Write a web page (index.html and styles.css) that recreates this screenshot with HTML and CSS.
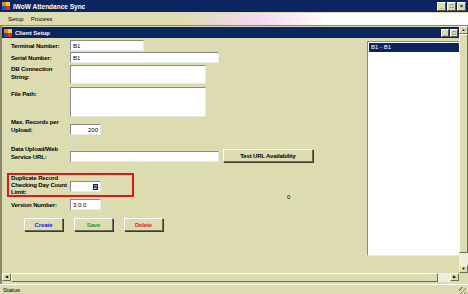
FILE: index.html
```html
<!DOCTYPE html>
<html lang="en">
<head>
    <meta charset="UTF-8">
    <title>iWoW Attendance Sync</title>
    <link rel="stylesheet" href="styles.css">
</head>
<body>
    <div class="app">
        <!-- Main window title -->
        <div class="titlebar">
            <svg class="appicon" width="8" height="8" viewBox="0 0 8 8">
                <rect x="0" y="0" width="4" height="4" fill="#f08020"/>
                <rect x="4" y="0" width="4" height="4" fill="#f0d020"/>
                <rect x="0" y="4" width="4" height="4" fill="#2050d0"/>
                <rect x="4" y="4" width="4" height="4" fill="#e03020"/>
            </svg>
            <span class="title">iWoW Attendance Sync</span>
            <div class="winbtns">
                <span class="winbtn">_</span>
                <span class="winbtn">&#9633;</span>
                <span class="winbtn">&#215;</span>
            </div>
        </div>

        <div class="menubar">
            <span class="menuitem">Setup</span>
            <span class="menuitem">Process</span>
        </div>

        <div class="mdi">
            <div class="mdi-main">
                <!-- Client Setup child window -->
                <div class="child">
                    <div class="child-title">
                        <svg class="appicon" width="8" height="8" viewBox="0 0 8 8">
                            <rect x="0" y="0" width="4" height="4" fill="#f08020"/>
                            <rect x="4" y="0" width="4" height="4" fill="#f0d020"/>
                            <rect x="0" y="4" width="4" height="4" fill="#2050d0"/>
                            <rect x="4" y="4" width="4" height="4" fill="#e03020"/>
                        </svg>
                        <span class="title">Client Setup</span>
                        <div class="winbtns">
                            <span class="winbtn">_</span>
                            <span class="winbtn">&#9633;</span>
                        </div>
                    </div>

                    <div class="child-body">
                        <div class="form">
                            <div class="row r1">
                                <label class="lbl mid">Terminal Number:</label>
                                <div class="field w-sm2">B1</div>
                            </div>
                            <div class="row r2">
                                <label class="lbl mid">Serial Number:</label>
                                <div class="field w-lg">B1</div>
                            </div>
                            <div class="row r3">
                                <label class="lbl">DB Connection String:</label>
                                <div class="field w-md h-db"></div>
                            </div>
                            <div class="row r4">
                                <label class="lbl pad4">File Path:</label>
                                <div class="field w-md h-path"></div>
                            </div>
                            <div class="row r5">
                                <label class="lbl">Max. Records per Upload:</label>
                                <div class="field w-xs num off6">200</div>
                            </div>
                            <div class="row r6">
                                <label class="lbl">Data Upload/Web Service URL:</label>
                                <div class="field w-lg off6"></div>
                                <button class="btn btn-test">Test URL Availability</button>
                            </div>
                            <div class="row r7">
                                <div class="highlight">
                                    <label class="lbl">Duplicate Record Checking Day Count Limit:</label>
                                    <div class="field w-xs num off6"><span class="sel">2</span></div>
                                </div>
                                <span class="zero">0</span>
                            </div>
                            <div class="row r8">
                                <label class="lbl mid">Version Number:</label>
                                <div class="field w-xs">3.0.0</div>
                            </div>
                            <div class="actions">
                                <button class="btn btn-create">Create</button>
                                <button class="btn btn-save">Save</button>
                                <button class="btn btn-delete">Delete</button>
                            </div>
                        </div>

                        <div class="listbox">
                            <div class="list-item selected">B1 - B1</div>
                        </div>
                    </div>
                </div>

                <div class="vscroll">
                    <span class="sbtn">&#9650;</span>
                    <span class="vthumb"></span>
                    <span class="strack"></span>
                    <span class="sbtn">&#9660;</span>
                </div>
            </div>
            <div class="mdi-bottom">
                <div class="hscroll">
                    <span class="sbtn">&#9664;</span>
                    <span class="hthumb"></span>
                    <span class="strack"></span>
                    <span class="sbtn">&#9654;</span>
                </div>
                <div class="corner"></div>
            </div>
        </div>

        <div class="statusbar">
            <span>Status</span>
            <span class="grip"></span>
        </div>
    </div>
</body>
</html>
```

FILE: styles.css
```css
body {
    margin: 0;
    background: #dddcb1;
    font-family: "Liberation Sans", Arial, sans-serif;
    font-size: 6px;
    color: #000;
}
.app {
    width: 468px;
    height: 294px;
    display: flex;
    flex-direction: column;
    overflow: hidden;
}

/* title bars */
.titlebar, .child-title {
    background: #0b2560;
    color: #fff;
    display: flex;
    align-items: center;
    font-weight: bold;
}
.titlebar {
    height: 12px;
    padding: 0 2px;
    font-size: 6.5px;
}
.appicon {
    margin-right: 3px;
    flex: none;
}
.title {
    flex: 1;
}
.winbtns {
    display: flex;
    gap: 1px;
}
.winbtn {
    width: 7px;
    height: 7px;
    background: #dddcb1;
    color: #000;
    border: 1px solid;
    border-color: #fff #555 #555 #fff;
    font-size: 6px;
    line-height: 6px;
    text-align: center;
    font-weight: bold;
}

.menubar {
    height: 12px;
    margin-top: 1px;
    display: flex;
    align-items: center;
    padding-left: 8px;
    gap: 7px;
    background: linear-gradient(to right, #dddcb1 0%, #dddcb1 38%, #f2d8f4 55%, #fbeefc 64%, #fff 70%);
}

/* MDI area */
.mdi {
    height: 258px;
    border-top: 1px solid #8a8866;
    border-left: 2px solid #8a8866;
    display: flex;
    flex-direction: column;
}
.mdi-main {
    display: flex;
    height: 247px;
}
.child {
    flex: 1;
    overflow: hidden;
    padding-top: 1px;
}
.child-title {
    height: 11px;
    padding: 0 1px 0 2px;
    font-size: 6px;
}
.child-title .winbtn {
    width: 6px;
    height: 6px;
}

.child-body {
    display: flex;
    height: 240px;
}
.form {
    width: 356px;
    padding: 2px 0 0 9px;
    display: flex;
    flex-direction: column;
}
.row {
    display: flex;
    align-items: flex-start;
}
.lbl {
    width: 59px;
    padding-right: 4px;
    box-sizing: border-box;
    font-weight: bold;
    line-height: 8px;
    letter-spacing: -0.15px;
    flex: none;
}
.lbl.mid {
    align-self: center;
}
.lbl.pad4 {
    padding-top: 3px;
}
.field {
    height: 11px;
    box-sizing: border-box;
    background: #fff;
    border: 1px solid;
    border-color: #8a8a8a #e8e8e8 #e8e8e8 #8a8a8a;
    padding: 1px 2px;
    line-height: 8px;
    font-size: 6px;
}
.w-xs { width: 31px; }
.w-sm2 { width: 74px; }
.w-md { width: 136px; }
.w-lg { width: 149px; }
.h-db { height: 19px; }
.h-path { height: 30px; }
.num { text-align: right; }
.off6 { margin-top: 6px; }

.r2 { margin-top: 1px; }
.r3 { margin-top: 2px; }
.r4 { margin-top: 3px; }
.r5 { margin-top: 1px; }
.r6 { margin-top: 10px; }
.r7 { margin-top: 11px; }
.r8 { margin-top: 2px; }

.highlight {
    display: flex;
    align-items: flex-start;
    width: 127px;
    height: 24px;
    box-sizing: border-box;
    border: 2px solid #e8121c;
    margin-left: -4px;
    padding-left: 2px;
}
.highlight .lbl {
    width: 59px;
    padding-right: 0;
    line-height: 7px;
}
.highlight .field {
    margin-top: 6px;
}
.sel {
    background: #0b2560;
    color: #fff;
    padding: 0 1px;
}
.zero {
    align-self: flex-end;
    margin-left: 153px;
    margin-bottom: -3px;
}

.btn {
    height: 13px;
    box-sizing: border-box;
    background: #dddcb1;
    border: 1px solid;
    border-color: #fff #6e6d55 #6e6d55 #fff;
    box-shadow: 1px 1px 0 #3c3b2c;
    font-family: inherit;
    font-size: 6px;
    font-weight: bold;
    letter-spacing: -0.15px;
    padding: 0;
    cursor: pointer;
}
.btn-test {
    width: 90px;
    margin: 4px 0 0 4px;
}
.actions {
    display: flex;
    margin: 8px 0 0 13px;
}
.actions .btn {
    width: 39px;
    margin-right: 11px;
}
.btn-create { color: #1c1ce0; }
.btn-save { color: #1e9a1e; }
.btn-delete { color: #e82020; }

.listbox {
    width: 90px;
    height: 212px;
    margin-top: 3px;
    background: #fff;
    border-left: 1px solid #8a8a8a;
    border-top: 1px solid #8a8a8a;
    border-bottom: 1px solid #e8e8e8;
    padding: 1px 0 0 1px;
}
.list-item {
    height: 9px;
    line-height: 9px;
    padding-left: 2px;
}
.list-item.selected {
    background: #0b2560;
    color: #fff;
}

/* scrollbars */
.vscroll {
    width: 9px;
    display: flex;
    flex-direction: column;
}
.sbtn {
    width: 9px;
    height: 8px;
    box-sizing: border-box;
    background: #dddcb1;
    border: 1px solid;
    border-color: #fff #6e6d55 #6e6d55 #fff;
    font-size: 4px;
    line-height: 6px;
    text-align: center;
    flex: none;
}
.vthumb {
    height: 219px;
    box-sizing: border-box;
    border: 1px solid;
    border-color: #fff #6e6d55 #6e6d55 #fff;
}
.strack {
    flex: 1;
    background: #efeedd;
}
.mdi-bottom {
    display: flex;
    height: 9px;
}
.hscroll {
    flex: 1;
    display: flex;
}
.hthumb {
    width: 427px;
    box-sizing: border-box;
    border: 1px solid;
    border-color: #fff #6e6d55 #6e6d55 #fff;
}
.corner {
    width: 9px;
}

.statusbar {
    flex: 1;
    border-top: 1px solid #fff;
    display: flex;
    align-items: center;
    justify-content: space-between;
    padding: 0 2px 0 3px;
}
.grip {
    width: 7px;
    height: 7px;
    align-self: flex-end;
    background: repeating-linear-gradient(135deg, transparent 0 2px, #8a8866 2px 3px);
}
```
